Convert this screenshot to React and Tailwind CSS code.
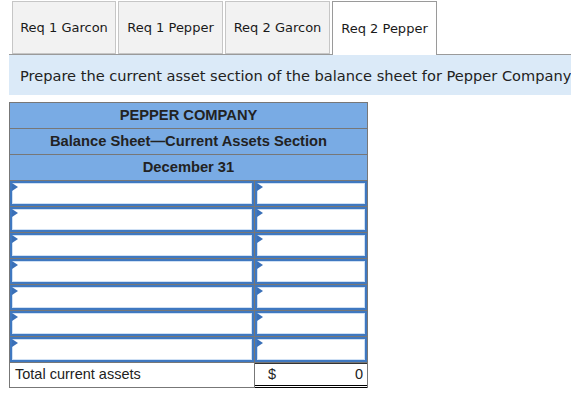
import React from "react";

function Tab({ label, active, w }) {
  return (
    <div
      className={
        "flex items-center justify-center border text-[13px] text-[#1a1a1a] " +
        (active
          ? "bg-white border-[#9a9a9a] border-b-0 h-[54px] -mb-[1px] relative z-10"
          : "bg-[#f2f2f2] border-[#c6c6c6] h-[53px]")
      }
      style={{ width: w }}
    >
      {label}
    </div>
  );
}

function InputCell() {
  return (
    <div className="relative h-full bg-white border-2 border-[#3f78c0] shadow-[inset_0_0_0_1px_#cfe0f4]">
      <div className="absolute top-[0px] left-[0px] w-0 h-0 border-y-[4px] border-y-transparent border-l-[6px] border-l-[#3a70b8]" />
    </div>
  );
}

export default function App() {
  const rows = [0, 1, 2, 3, 4, 5, 6];
  return (
    <div className="w-[571px] h-[395px] bg-white overflow-hidden" style={{ fontFamily: '"DejaVu Sans", Verdana, sans-serif' }}>
      <div className="ml-[9px] pt-[1px] pl-[3px] flex items-end gap-[2px] border-b border-[#9a9a9a]">
        <Tab label="Req 1 Garcon" w={104} />
        <Tab label="Req 1 Pepper" w={105} />
        <Tab label="Req 2 Garcon" w={105} />
        <Tab label="Req 2 Pepper" w={105} active />
      </div>
      <div className="ml-[9px] h-[40px] bg-[#dbeaf8] flex items-center pl-[11px] pt-[2px] whitespace-nowrap overflow-hidden text-[14.6px] text-[#222]">
        Prepare the current asset section of the balance sheet for Pepper Company
      </div>
      <div
        className="ml-[9px] mt-[7px] w-[359px] border-x border-t border-[#777] text-[#222]"
        style={{ fontFamily: '"Liberation Sans", Arial, sans-serif' }}
      >
        <div className="h-[26px] bg-[#79abe4] border-b border-[#777] flex items-center justify-center text-[14.7px] font-bold">
          PEPPER COMPANY
        </div>
        <div className="h-[26px] bg-[#79abe4] border-b border-[#777] flex items-center justify-center text-[14.7px] font-bold">
          Balance Sheet—Current Assets Section
        </div>
        <div className="h-[26px] bg-[#79abe4] border-b border-[#777] flex items-center justify-center text-[14.7px] font-bold">
          December 31
        </div>
        {rows.map((r) => (
          <div key={r} className="h-[26px] border-b border-[#777] flex">
            <div className="w-[245px] border-r border-[#777]">
              <InputCell />
            </div>
            <div className="flex-1">
              <InputCell />
            </div>
          </div>
        ))}
        <div className="h-[25px] flex text-[14.5px]">
          <div className="w-[245px] border-r border-b border-[#777] flex items-center pl-[5px]">
            Total current assets
          </div>
          <div className="flex-1 border-t border-[#333] border-b-[3px] border-b-black border-double flex items-center justify-between pl-[13px] pr-[4px]">
            <span>$</span>
            <span>0</span>
          </div>
        </div>
      </div>
    </div>
  );
}
